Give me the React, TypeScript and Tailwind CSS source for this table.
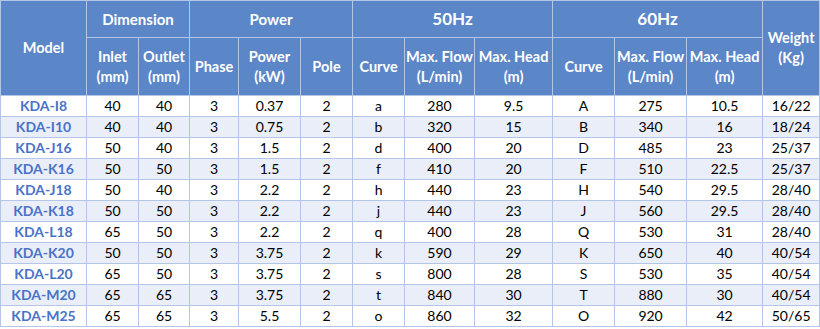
const rows = [
  ["KDA-I8", "40", "40", "3", "0.37", "2", "a", "280", "9.5", "A", "275", "10.5", "16/22"],
  ["KDA-I10", "40", "40", "3", "0.75", "2", "b", "320", "15", "B", "340", "16", "18/24"],
  ["KDA-J16", "50", "40", "3", "1.5", "2", "d", "400", "20", "D", "485", "23", "25/37"],
  ["KDA-K16", "50", "50", "3", "1.5", "2", "f", "410", "20", "F", "510", "22.5", "25/37"],
  ["KDA-J18", "50", "40", "3", "2.2", "2", "h", "440", "23", "H", "540", "29.5", "28/40"],
  ["KDA-K18", "50", "50", "3", "2.2", "2", "j", "440", "23", "J", "560", "29.5", "28/40"],
  ["KDA-L18", "65", "50", "3", "2.2", "2", "q", "400", "28", "Q", "530", "31", "28/40"],
  ["KDA-K20", "50", "50", "3", "3.75", "2", "k", "590", "29", "K", "650", "40", "40/54"],
  ["KDA-L20", "65", "50", "3", "3.75", "2", "s", "800", "28", "S", "530", "35", "40/54"],
  ["KDA-M20", "65", "65", "3", "3.75", "2", "t", "840", "30", "T", "880", "30", "40/54"],
  ["KDA-M25", "65", "65", "3", "5.5", "2", "o", "860", "32", "O", "920", "42", "50/65"],
];

const widths = [86, 52, 51, 49, 62, 52, 52, 70, 78, 62, 72, 76, 57];

function Head({ title, unit }: { title: string; unit?: string }) {
  return (
    <div className="flex flex-col items-center leading-[20px] whitespace-nowrap">
      <span>{title}</span>
      {unit && <span className="text-[14.5px] leading-[20px]">{unit}</span>}
    </div>
  );
}

export default function App() {
  const th = "border border-[#b4c6e7] bg-[#5b86c8] text-white font-bold text-[14.5px] text-center p-0 whitespace-nowrap";
  return (
    <div className="w-[820px] h-[329px] bg-white overflow-hidden" style={{ fontFamily: "Lato, 'Noto Sans', sans-serif" }}>
      <table className="table-fixed border-collapse w-[820px] border-l border-l-[#4a72c0]">
        <colgroup>
          {widths.map((w, i) => (
            <col key={i} style={{ width: w }} />
          ))}
        </colgroup>
        <thead>
          <tr className="h-[37px]">
            <th rowSpan={2} className={th}>Model</th>
            <th colSpan={2} className={`${th} text-[15px]`}>Dimension</th>
            <th colSpan={3} className={`${th} text-[15px]`}>Power</th>
            <th colSpan={3} className={`${th} text-[17px]`}>50Hz</th>
            <th colSpan={3} className={`${th} text-[17px]`}>60Hz</th>
            <th rowSpan={2} className={th}>
              <Head title="Weight" unit="(Kg)" />
            </th>
          </tr>
          <tr className="h-[58px]">
            <th className={th}><Head title="Inlet" unit="(mm)" /></th>
            <th className={th}><Head title="Outlet" unit="(mm)" /></th>
            <th className={th}>Phase</th>
            <th className={th}><Head title="Power" unit="(kW)" /></th>
            <th className={th}>Pole</th>
            <th className={th}>Curve</th>
            <th className={th}><Head title="Max. Flow" unit="(L/min)" /></th>
            <th className={th}><Head title="Max. Head" unit="(m)" /></th>
            <th className={th}>Curve</th>
            <th className={th}><Head title="Max. Flow" unit="(L/min)" /></th>
            <th className={th}><Head title="Max. Head" unit="(m)" /></th>
          </tr>
        </thead>
        <tbody>
          {rows.map((r, i) => (
            <tr key={i} className={`h-[21px] ${i % 2 === 1 ? "bg-[#e9eef9]" : "bg-white"}`}>
              {r.map((c, j) => (
                <td
                  key={j}
                  className={`border border-[#b4c6e7] text-center p-0 leading-[20px] text-[14px] ${
                    j === 0 ? "font-bold text-[#4a72c8]" : "text-black"
                  }`}
                >
                  {c}
                </td>
              ))}
            </tr>
          ))}
        </tbody>
      </table>
    </div>
  );
}
